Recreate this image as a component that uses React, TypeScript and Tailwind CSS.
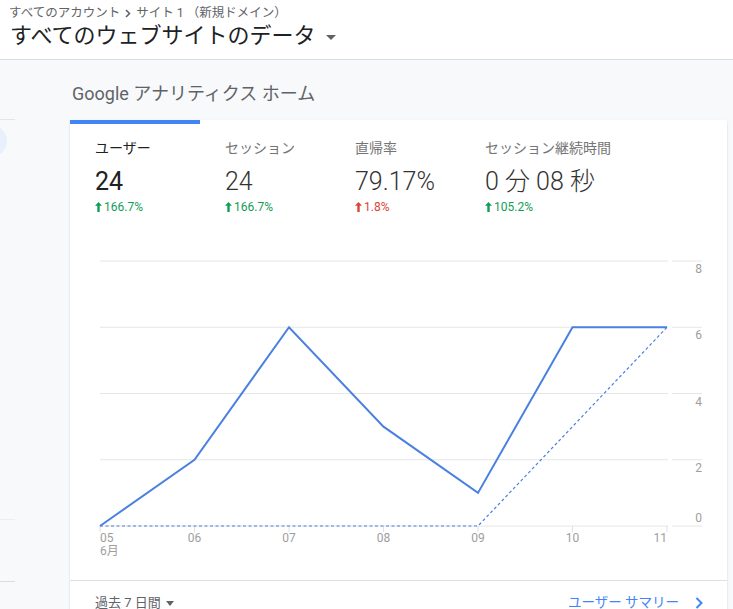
import React from "react";

const FONT = { fontFamily: 'Roboto, "Noto Sans CJK JP", "Noto Sans", sans-serif' };

interface Metric {
  label: string;
  value: string;
  change: string;
  good: boolean;
}

const metrics: Metric[] = [
  { label: "ユーザー", value: "24", change: "166.7%", good: true },
  { label: "セッション", value: "24", change: "166.7%", good: true },
  { label: "直帰率", value: "79.17%", change: "1.8%", good: false },
  { label: "セッション継続時間", value: "0 分 08 秒", change: "105.2%", good: true },
];

const days = ["05", "06", "07", "08", "09", "10", "11"];
const current = [0, 2, 6, 3, 1, 6, 6];
const previous = [0, 0, 0, 0, 0, 3, 6];

function UpArrow({ color }: { color: string }) {
  return (
    <svg width="7" height="10" viewBox="0 0 7 10" className="mr-[2px] inline-block">
      <path d="M3.5 0 L7 3.8 L4.7 3.8 L4.7 10 L2.3 10 L2.3 3.8 L0 3.8 Z" fill={color} />
    </svg>
  );
}

function Chart() {
  const x0 = 30;
  const step = 94.5;
  const yBase = 312;
  const unit = 33.125;
  const px = (i: number) => x0 + i * step;
  const py = (v: number) => yBase - v * unit;
  const cur = current.map((v, i) => `${px(i)},${py(v)}`).join(" ");
  const prev = previous.map((v, i) => `${px(i)},${py(v)}`).join(" ");
  const grid = [8, 6, 4, 2, 0];

  return (
    <svg width="657" height="366" className="block" style={FONT}>
      {grid.map((g) => {
        const y = py(g);
        return (
          <g key={g}>
            <line x1={x0} x2={598} y1={y} y2={y} stroke="#e6e6e6" strokeWidth="1" />
            <line x1={602} x2={632} y1={y} y2={y} stroke="#e6e6e6" strokeWidth="1" />
            <text
              x={632}
              y={g === 0 ? y - 4 : y + 12}
              textAnchor="end"
              fontSize="12"
              fill="#9e9e9e"
            >
              {g}
            </text>
          </g>
        );
      })}
      {days.map((d, i) => (
        <g key={d}>
          <line x1={px(i)} x2={px(i)} y1={yBase} y2={yBase + 6} stroke="#e0e0e0" strokeWidth="1" />
          <text
            x={px(i)}
            y={328}
            fontSize="12"
            fill="#9e9e9e"
            textAnchor={i === 0 ? "start" : i === days.length - 1 ? "end" : "middle"}
          >
            {d}
          </text>
        </g>
      ))}
      <text x={px(0)} y={341} fontSize="12" fill="#9e9e9e">
        6月
      </text>
      <polyline
        points={prev}
        fill="none"
        stroke="#4a80e0"
        strokeWidth="1.2"
        strokeDasharray="3 2.5"
      />
      <polyline points={cur} fill="none" stroke="#4a80e0" strokeWidth="2" />
    </svg>
  );
}

export default function App() {
  return (
    <div className="min-h-screen w-[733px] overflow-hidden bg-[#f8f9fa]" style={FONT}>
      {/* Header */}
      <div className="h-[60px] border-b border-[#dadce0] bg-white">
        <div className="flex items-center pl-[9px] pt-[4px] text-[12.5px] leading-[18px] text-[#5f6368]">
          <span>すべてのアカウント</span>
          <svg width="6" height="9" viewBox="0 0 6 9" className="mx-[5px]">
            <path d="M1 1 L4.5 4.5 L1 8" fill="none" stroke="#5f6368" strokeWidth="1.6" />
          </svg>
          <span>サイト 1 （新規ドメイン）</span>
        </div>
        <div className="flex items-center pl-[10px] text-[22px] leading-[28px] text-[#202124]">
          <span>すべてのウェブサイトのデータ</span>
          <span className="ml-[10px] mt-[3px] h-0 w-0 border-x-[5px] border-t-[5px] border-x-transparent border-t-[#5f6368]" />
        </div>
      </div>

      {/* Body */}
      <div className="flex">
        <div className="w-[15px] shrink-0 overflow-hidden">
          <div className="mt-[59px] border-t border-[#e3e5e8]" />
          <div className="-ml-[25px] mt-[5px] h-[32px] w-[32px] rounded-full bg-[#e8f0fe]" />
          <div className="mt-[362px] border-t border-[#eceef0]" />
          <div className="mt-[61px] border-t border-[#dadce0]" />
        </div>

        <div className="ml-[55px] flex flex-col">
          <div className="flex h-[60px] items-center pl-[2px] pt-[6px] text-[18px] text-[#5f6368]">
            Google アナリティクス ホーム
          </div>

          <div className="w-[657px] rounded-[2px] bg-white shadow-[0_1px_2px_rgba(0,0,0,0.18)]">
            <div className="h-[4px] w-[130px] bg-[#4285f4]" />

            <div className="flex pl-[25px] pt-[14px]">
              {metrics.map((m, i) => (
                <div key={m.label} className={i === 3 ? "w-[180px]" : "w-[130px]"}>
                  <div
                    className={`text-[14px] leading-[20px] ${
                      i === 0 ? "text-[#212121]" : "text-[#757575]"
                    }`}
                  >
                    {m.label}
                  </div>
                  <div
                    className={`mt-[8px] text-[25px] leading-[32px] ${
                      i === 0 ? "font-normal text-[#212121]" : "font-light text-[#333333]"
                    }`}
                  >
                    {m.value}
                  </div>
                  <div
                    className={`mt-[2px] flex items-center text-[12px] leading-[14px] ${
                      m.good ? "text-[#0f9d58]" : "text-[#db4437]"
                    }`}
                  >
                    <UpArrow color={m.good ? "#0f9d58" : "#db4437"} />
                    {m.change}
                  </div>
                </div>
              ))}
            </div>

            <Chart />

            <div className="flex h-[44px] items-center justify-between border-t border-[#e0e0e0] pl-[25px] pr-[24px] text-[13px]">
              <div className="flex items-center text-[#5f6368]">
                <span>過去 7 日間</span>
                <span className="ml-[5px] mt-[1px] h-0 w-0 border-x-[4px] border-t-[5px] border-x-transparent border-t-[#5f6368]" />
              </div>
              <div className="flex items-center text-[#4285f4]">
                <span className="text-[13.5px]">ユーザー サマリー</span>
                <svg width="8" height="12" viewBox="0 0 8 12" className="ml-[16px]">
                  <path d="M1.5 1 L6.5 6 L1.5 11" fill="none" stroke="#4285f4" strokeWidth="2" />
                </svg>
              </div>
            </div>
          </div>
        </div>
      </div>
    </div>
  );
}
